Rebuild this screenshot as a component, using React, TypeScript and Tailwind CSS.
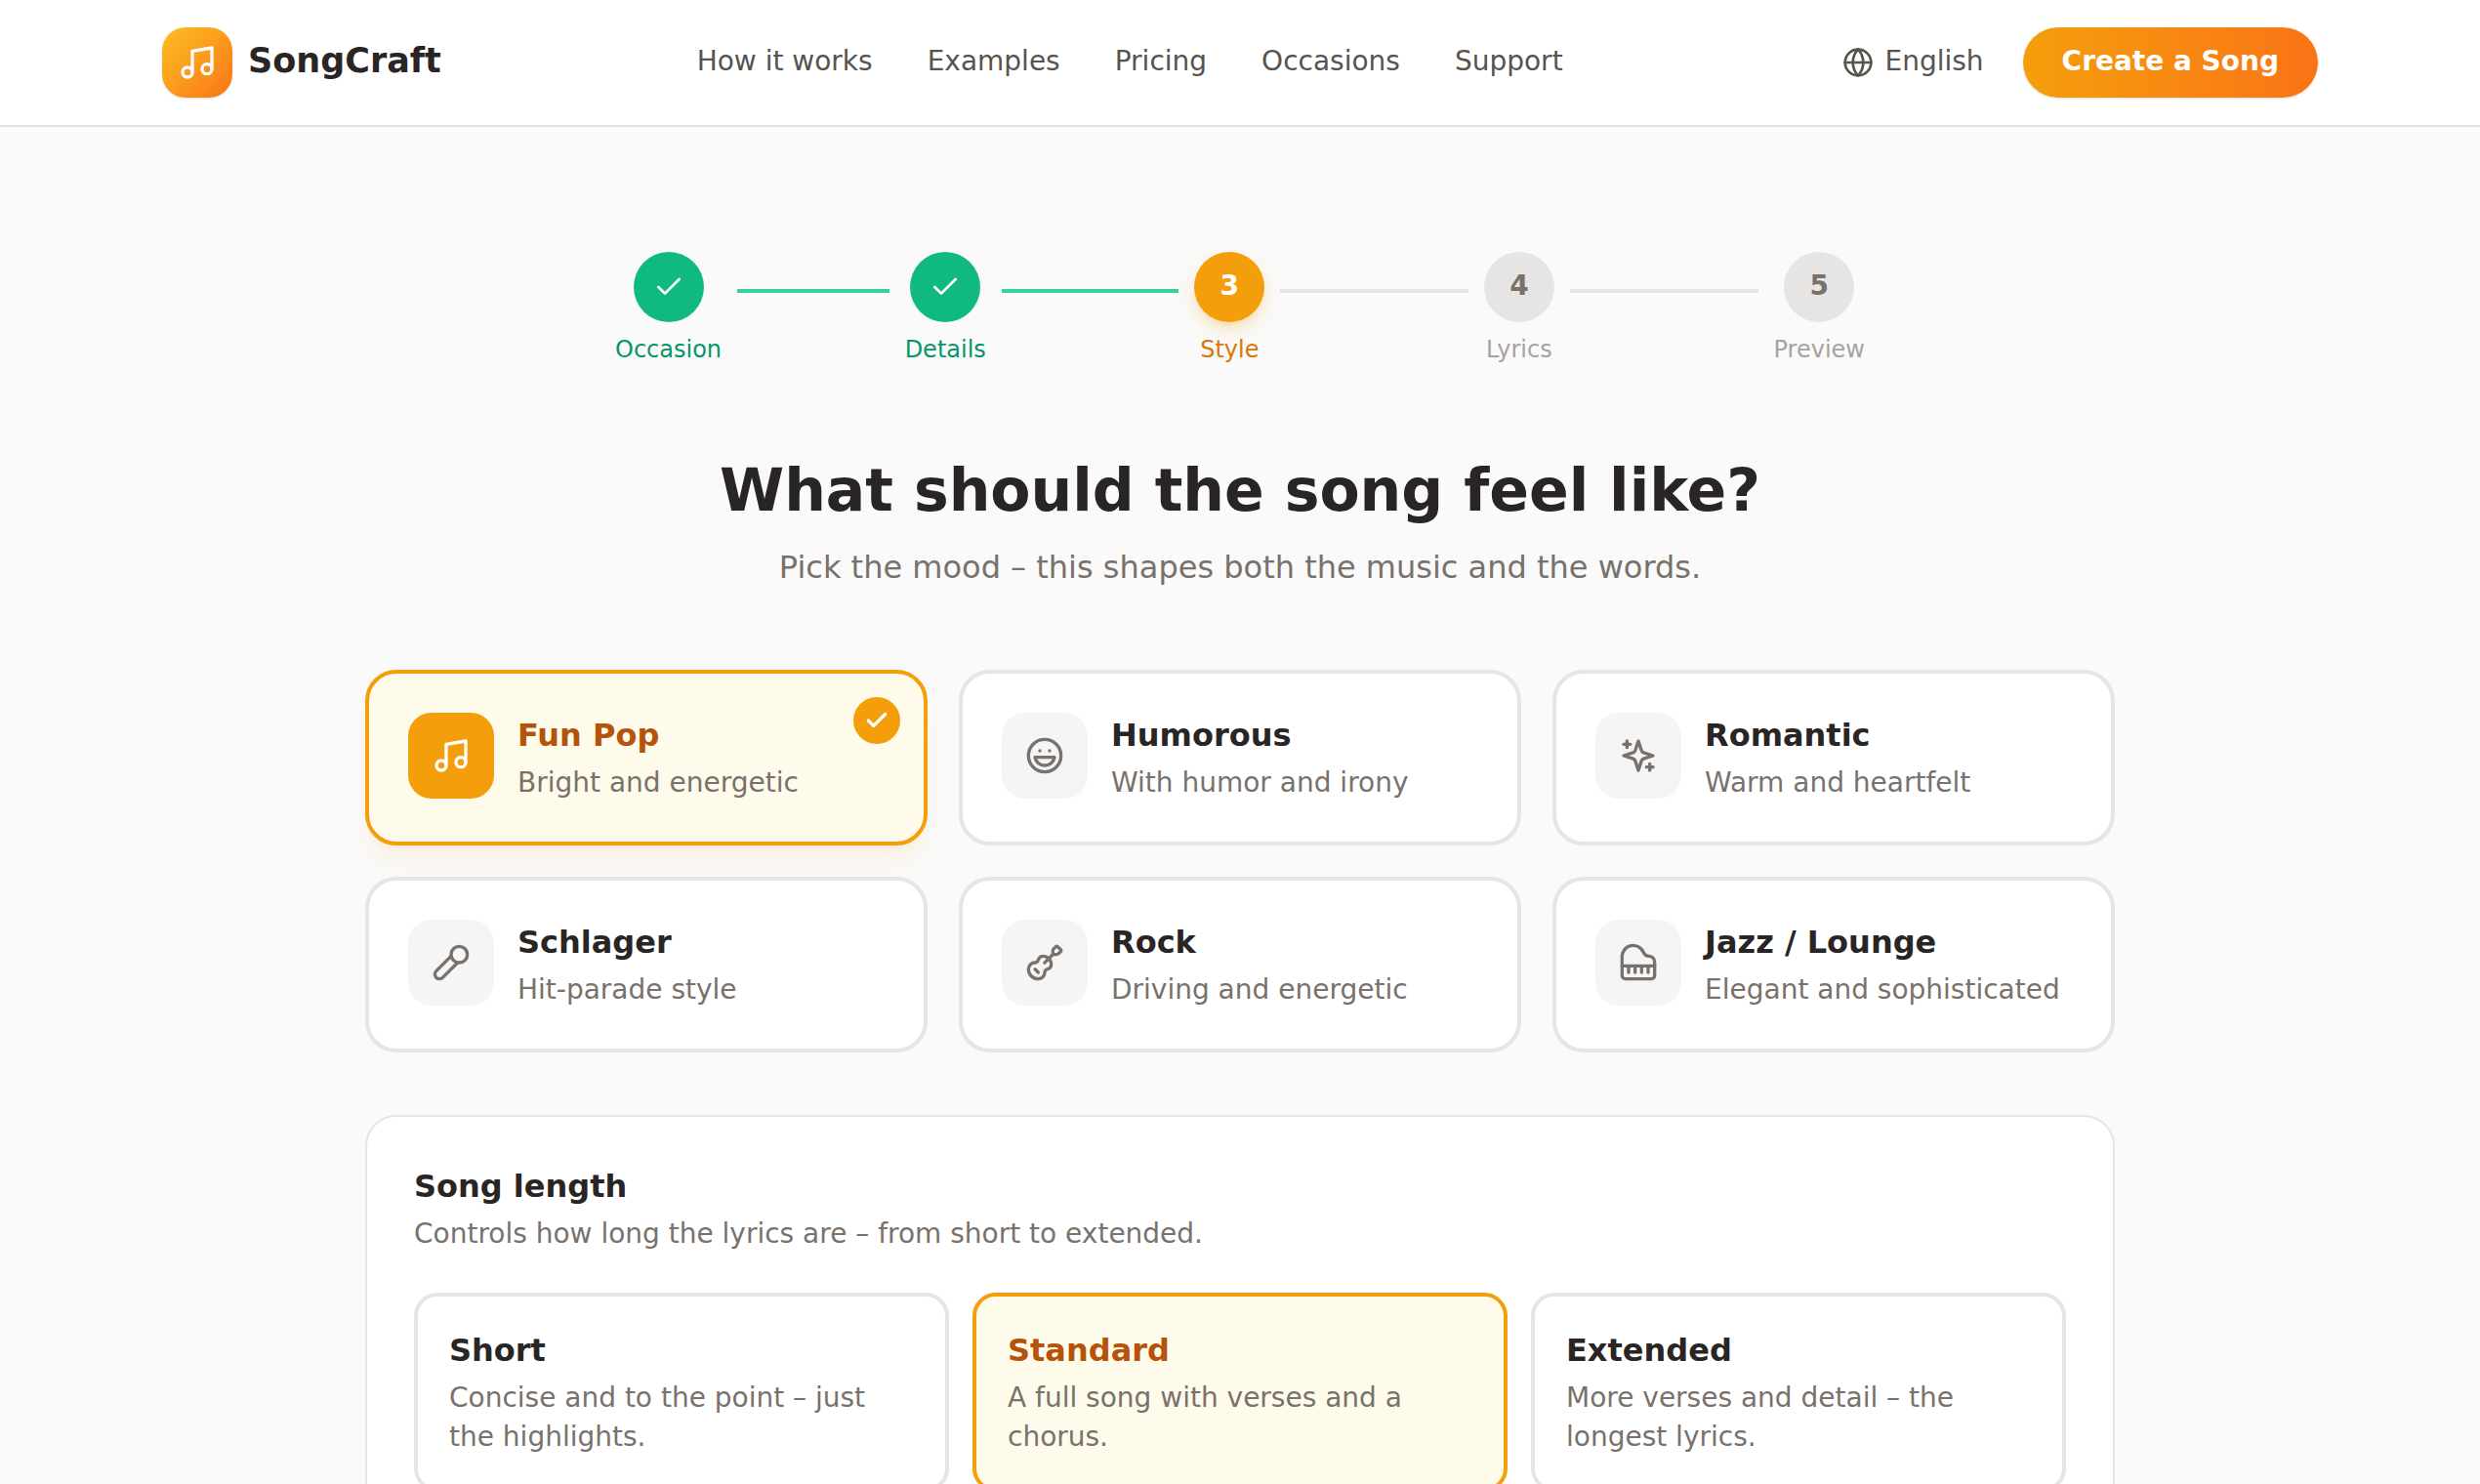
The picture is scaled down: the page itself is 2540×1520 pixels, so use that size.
import React from "react";
import { Check, Globe, Guitar, Laugh, Music, Piano } from "lucide-react";

type IconProps = { className?: string };

const strokeProps = {
  viewBox: "0 0 24 24",
  fill: "none",
  stroke: "currentColor",
  strokeWidth: 2,
  strokeLinecap: "round" as const,
  strokeLinejoin: "round" as const,
  "aria-hidden": true,
};

function Sparkles({ className }: IconProps) {
  return (
    <svg {...strokeProps} className={className}>
      <path d="m12 3-1.912 5.813a2 2 0 0 1-1.275 1.275L3 12l5.813 1.912a2 2 0 0 1 1.275 1.275L12 21l1.912-5.813a2 2 0 0 1 1.275-1.275L21 12l-5.813-1.912a2 2 0 0 1-1.275-1.275L12 3Z" />
      <path d="M5 3v4" />
      <path d="M19 17v4" />
      <path d="M3 5h4" />
      <path d="M17 19h4" />
    </svg>
  );
}

function Microphone({ className }: IconProps) {
  return (
    <svg {...strokeProps} className={className}>
      <path d="m12 8-9.04 9.06a2.82 2.82 0 1 0 3.98 3.98L16 12" />
      <circle cx="17" cy="7" r="5" />
    </svg>
  );
}

const navLinks = ["How it works", "Examples", "Pricing", "Occasions", "Support"];

const steps = [
  { label: "Occasion", state: "done" },
  { label: "Details", state: "done" },
  { label: "Style", state: "current" },
  { label: "Lyrics", state: "todo" },
  { label: "Preview", state: "todo" },
];

const moods = [
  { title: "Fun Pop", text: "Bright and energetic", Icon: Music, selected: true },
  { title: "Humorous", text: "With humor and irony", Icon: Laugh, selected: false },
  { title: "Romantic", text: "Warm and heartfelt", Icon: Sparkles, selected: false },
  { title: "Schlager", text: "Hit-parade style", Icon: Microphone, selected: false },
  { title: "Rock", text: "Driving and energetic", Icon: Guitar, selected: false },
  { title: "Jazz / Lounge", text: "Elegant and sophisticated", Icon: Piano, selected: false },
];

const lengths = [
  { title: "Short", text: "Concise and to the point – just the highlights.", selected: false },
  { title: "Standard", text: "A full song with verses and a chorus.", selected: true },
  { title: "Extended", text: "More verses and detail – the longest lyrics.", selected: false },
];

function Header() {
  return (
    <header className="border-b-2 border-[#e3e3e3] bg-white">
      <div className="mx-auto flex h-32 max-w-[2304px] items-center justify-between px-12">
        <a href="#" className="flex items-center gap-4">
          <span className="flex size-18 items-center justify-center rounded-3xl bg-linear-to-br from-[#fbbf24] to-[#f97316] text-white shadow-sm">
            <Music className="size-10" aria-hidden />
          </span>
          <span className="pb-1 text-[35px] leading-14 font-bold">SongCraft</span>
        </a>
        <nav className="flex items-center gap-14 pb-0.5 text-[28px] leading-10 text-[#57534e]">
          {navLinks.map((label) => (
            <a key={label} href="#">
              {label}
            </a>
          ))}
        </nav>
        <div className="flex items-center gap-4 text-[28px] leading-10">
          <button type="button" className="flex items-center gap-3 px-6 text-[#57534e]">
            <Globe className="size-8" aria-hidden />
            <span className="pb-0.5">English</span>
          </button>
          <button
            type="button"
            className="h-18 rounded-full bg-linear-to-r from-[#f59e0b] to-[#f97316] px-10 pb-0.5 font-bold text-white shadow-sm"
          >
            Create a Song
          </button>
        </div>
      </div>
    </header>
  );
}

const circleStyles: Record<string, string> = {
  done: "bg-[#10b981] text-white",
  current: "bg-[#f59e0b] text-white shadow-[0_8px_24px_-4px_rgba(245,158,11,0.3),0_6px_12px_-6px_rgba(245,158,11,0.3)]",
  todo: "bg-[#e7e5e4] text-[#78716c]",
};

const labelStyles: Record<string, string> = {
  done: "text-[#059669]",
  current: "text-[#d97706]",
  todo: "text-[#a8a29e]",
};

function Stepper() {
  return (
    <ol className="mx-auto flex max-w-[1280px] items-center">
      {steps.map((step, index) => (
        <li
          key={step.label}
          aria-current={step.state === "current" ? "step" : undefined}
          className={index < steps.length - 1 ? "flex flex-1 items-center" : "flex items-center"}
        >
          <div className="flex flex-col items-center gap-3">
            <span
              className={`flex size-18 items-center justify-center rounded-full text-[28px] leading-10 font-bold ${circleStyles[step.state]}`}
            >
              {step.state === "done" ? (
                <Check className="size-8" aria-hidden />
              ) : (
                <span className="pb-0.5">{index + 1}</span>
              )}
            </span>
            <span className={`text-2xl ${labelStyles[step.state]}`}>{step.label}</span>
          </div>
          {index < steps.length - 1 && (
            <span
              className={`mx-4 mb-9 h-1 flex-1 ${step.state === "done" ? "bg-[#34d399]" : "bg-[#e5e5e5]"}`}
            />
          )}
        </li>
      ))}
    </ol>
  );
}

function MoodCard({ title, text, Icon, selected }: (typeof moods)[number]) {
  return (
    <button
      type="button"
      aria-pressed={selected}
      className={`relative flex items-start gap-6 rounded-[32px] border-4 p-10 text-left ${
        selected
          ? "border-[#f59e0b] bg-[#fffbeb] shadow-[0_20px_30px_-6px_rgba(245,158,11,0.1),0_8px_12px_-8px_rgba(245,158,11,0.1)]"
          : "border-[#e5e5e5] bg-white"
      }`}
    >
      <span
        className={`flex size-22 shrink-0 items-center justify-center rounded-3xl ${
          selected ? "bg-[#f59e0b] text-white" : "bg-[#f5f5f5] text-[#78716c]"
        }`}
      >
        <Icon className="size-10" aria-hidden />
      </span>
      <span className="flex flex-col gap-1.5">
        <span className={`text-[32px] leading-[46px] font-bold ${selected ? "text-[#b45309]" : ""}`}>{title}</span>
        <span className="text-[28px] leading-10 text-[#78716c]">{text}</span>
      </span>
      {selected && (
        <span className="absolute top-6 right-6 flex size-12 items-center justify-center rounded-full bg-[#f59e0b] text-white">
          <Check className="size-6.5" strokeWidth={3} aria-hidden />
        </span>
      )}
    </button>
  );
}

function LengthCard({ title, text, selected }: (typeof lengths)[number]) {
  return (
    <button
      type="button"
      aria-pressed={selected}
      className={`flex flex-col gap-1.5 rounded-3xl border-4 p-8 text-left ${
        selected ? "border-[#f59e0b] bg-[#fffbeb]" : "border-[#e5e5e5] bg-white"
      }`}
    >
      <span className={`text-[32px] leading-[46px] font-bold ${selected ? "text-[#b45309]" : ""}`}>{title}</span>
      <span className="text-[28px] leading-10 text-[#78716c]">{text}</span>
    </button>
  );
}

export default function App() {
  return (
    <div className="min-h-screen bg-[#fafafa] font-['DejaVu_Sans',sans-serif] text-[#292524]">
      <Header />
      <main className="mx-auto max-w-[1888px] px-12 pt-32 pb-32">
        <Stepper />
        <h1 className="mt-24 text-center text-[60px] leading-16 font-bold">What should the song feel like?</h1>
        <p className="mt-6 pb-0.5 text-center text-[32px] leading-[46px] text-[#78716c]">
          Pick the mood – this shapes both the music and the words.
        </p>
        <div className="mt-20 grid grid-cols-3 gap-8">
          {moods.map((mood) => (
            <MoodCard key={mood.title} {...mood} />
          ))}
        </div>
        <section className="mt-16 rounded-[32px] border-2 border-[#e5e5e5] bg-white p-12">
          <div className="flex flex-col gap-1.5">
            <h2 className="text-[32px] leading-[46px] font-bold">Song length</h2>
            <p className="text-[28px] leading-10 text-[#78716c]">
              Controls how long the lyrics are – from short to extended.
            </p>
          </div>
          <div className="mt-10 grid grid-cols-3 gap-6">
            {lengths.map((length) => (
              <LengthCard key={length.title} {...length} />
            ))}
          </div>
        </section>
      </main>
    </div>
  );
}
